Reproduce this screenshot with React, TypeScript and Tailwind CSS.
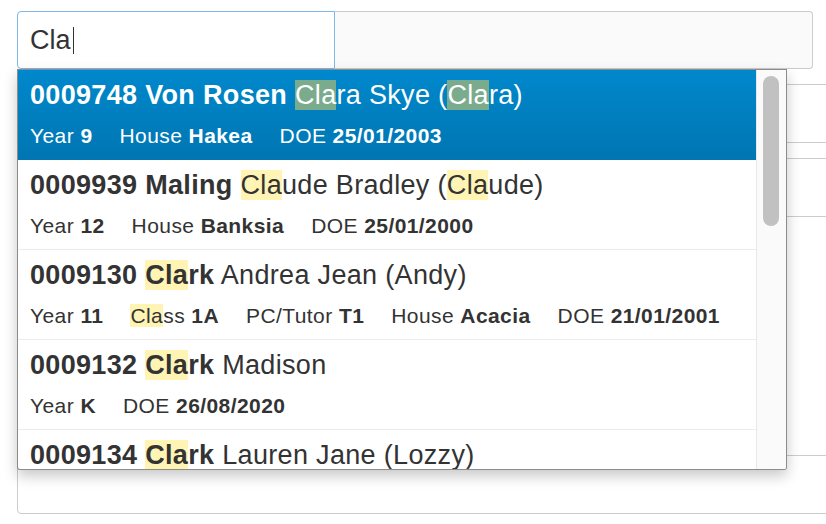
import React from 'react';

interface Field {
  label: string;
  value: string;
  hl?: boolean;
}

interface Student {
  id: string;
  surname: string;
  given: string;
  pref?: string;
  fields: Field[];
}

const students: Student[] = [
  {
    id: '0009748',
    surname: 'Von Rosen',
    given: 'Clara Skye',
    pref: 'Clara',
    fields: [
      { label: 'Year', value: '9' },
      { label: 'House', value: 'Hakea' },
      { label: 'DOE', value: '25/01/2003' },
    ],
  },
  {
    id: '0009939',
    surname: 'Maling',
    given: 'Claude Bradley',
    pref: 'Claude',
    fields: [
      { label: 'Year', value: '12' },
      { label: 'House', value: 'Banksia' },
      { label: 'DOE', value: '25/01/2000' },
    ],
  },
  {
    id: '0009130',
    surname: 'Clark',
    given: 'Andrea Jean',
    pref: 'Andy',
    fields: [
      { label: 'Year', value: '11' },
      { label: 'Class', value: '1A', hl: true },
      { label: 'PC/Tutor', value: 'T1' },
      { label: 'House', value: 'Acacia' },
      { label: 'DOE', value: '21/01/2001' },
    ],
  },
  {
    id: '0009132',
    surname: 'Clark',
    given: 'Madison',
    fields: [
      { label: 'Year', value: 'K' },
      { label: 'DOE', value: '26/08/2020' },
    ],
  },
  {
    // last row is scrolled past the bottom edge, only its name line shows
    id: '0009134',
    surname: 'Clark',
    given: 'Lauren Jane',
    pref: 'Lozzy',
    fields: [],
  },
];

const QUERY = 'Cla';

// wrap a leading "Cla" in a highlight span
const Hl: React.FC<{ text: string; active: boolean }> = ({ text, active }) => {
  if (!text.startsWith(QUERY)) return <>{text}</>;
  return (
    <>
      <span className={active ? 'bg-[#7aab8c]' : 'bg-[#fff4b3]'}>{QUERY}</span>
      {text.slice(QUERY.length)}
    </>
  );
};

const Row: React.FC<{ s: Student; active: boolean }> = ({ s, active }) => (
  <div
    className={
      active
        ? 'pl-[12px] pt-[9px] pb-[10px] bg-gradient-to-b from-[#0088cc] to-[#0076b2] text-white'
        : 'pl-[12px] pt-[9px] pb-[9px] border-b border-[#ececec] text-[#333333]'
    }
  >
    <div className="text-[27px] leading-[32px] tracking-[0.012em] whitespace-nowrap">
      <b>
        {s.id} <Hl text={s.surname} active={active} />
      </b>{' '}
      <Hl text={s.given} active={active} />
      {s.pref && (
        <>
          {' ('}
          <Hl text={s.pref} active={active} />)
        </>
      )}
    </div>
    {s.fields.length > 0 && (
      <div className="mt-[11px] flex gap-x-[27px] text-[21px] leading-[28px] tracking-[0.02em] whitespace-nowrap">
        {s.fields.map((f) => (
          <span key={f.label}>
            {f.hl ? <Hl text={f.label} active={active} /> : f.label} <b>{f.value}</b>
          </span>
        ))}
      </div>
    )}
  </div>
);

export default function App() {
  return (
    <div className="relative w-[826px] h-[524px] overflow-hidden bg-white font-['Liberation_Sans',Arial,sans-serif]">
      <div className="pt-[11px] pl-[17px]">
        <div className="flex h-[58px] mr-[13px]">
          <div className="w-[318px] flex items-center pl-[12px] bg-white border border-[#80b8ea] rounded-l-[4px] text-[27px] text-[#333333]">
            Cla
            <span className="inline-block w-[1.5px] h-[27px] bg-[#333333] ml-[2px]" />
          </div>
          <div className="flex-1 bg-[#fafafa] border border-l-0 border-[#cccccc] rounded-r-[4px]" />
        </div>

        <div className="mt-[15px] w-[840px] h-[59px] border border-[#cccccc] rounded-l-[4px]" />
        <div className="mt-[15px] w-[840px] h-[59px] border border-[#cccccc] rounded-l-[4px]" />
        <div className="mt-[238px] w-[840px] h-[59px] border border-[#cccccc] rounded-l-[4px]" />
      </div>

      <div className="absolute left-[17px] top-[69px] w-[770px] h-[401px] flex bg-white border border-[rgba(0,0,0,0.45)] rounded-b-[3px] shadow-[0_6px_14px_rgba(0,0,0,0.22)] overflow-hidden">
        <div className="flex-1 overflow-hidden">
          {students.map((s, i) => (
            <Row key={s.id} s={s} active={i === 0} />
          ))}
        </div>
        <div className="w-[30px] bg-[#fafafa] border-l border-[#e8e8e8] pt-[6px] pl-[6px]">
          <div className="w-[16px] h-[150px] rounded-full bg-[#c1c1c1]" />
        </div>
      </div>
    </div>
  );
}
